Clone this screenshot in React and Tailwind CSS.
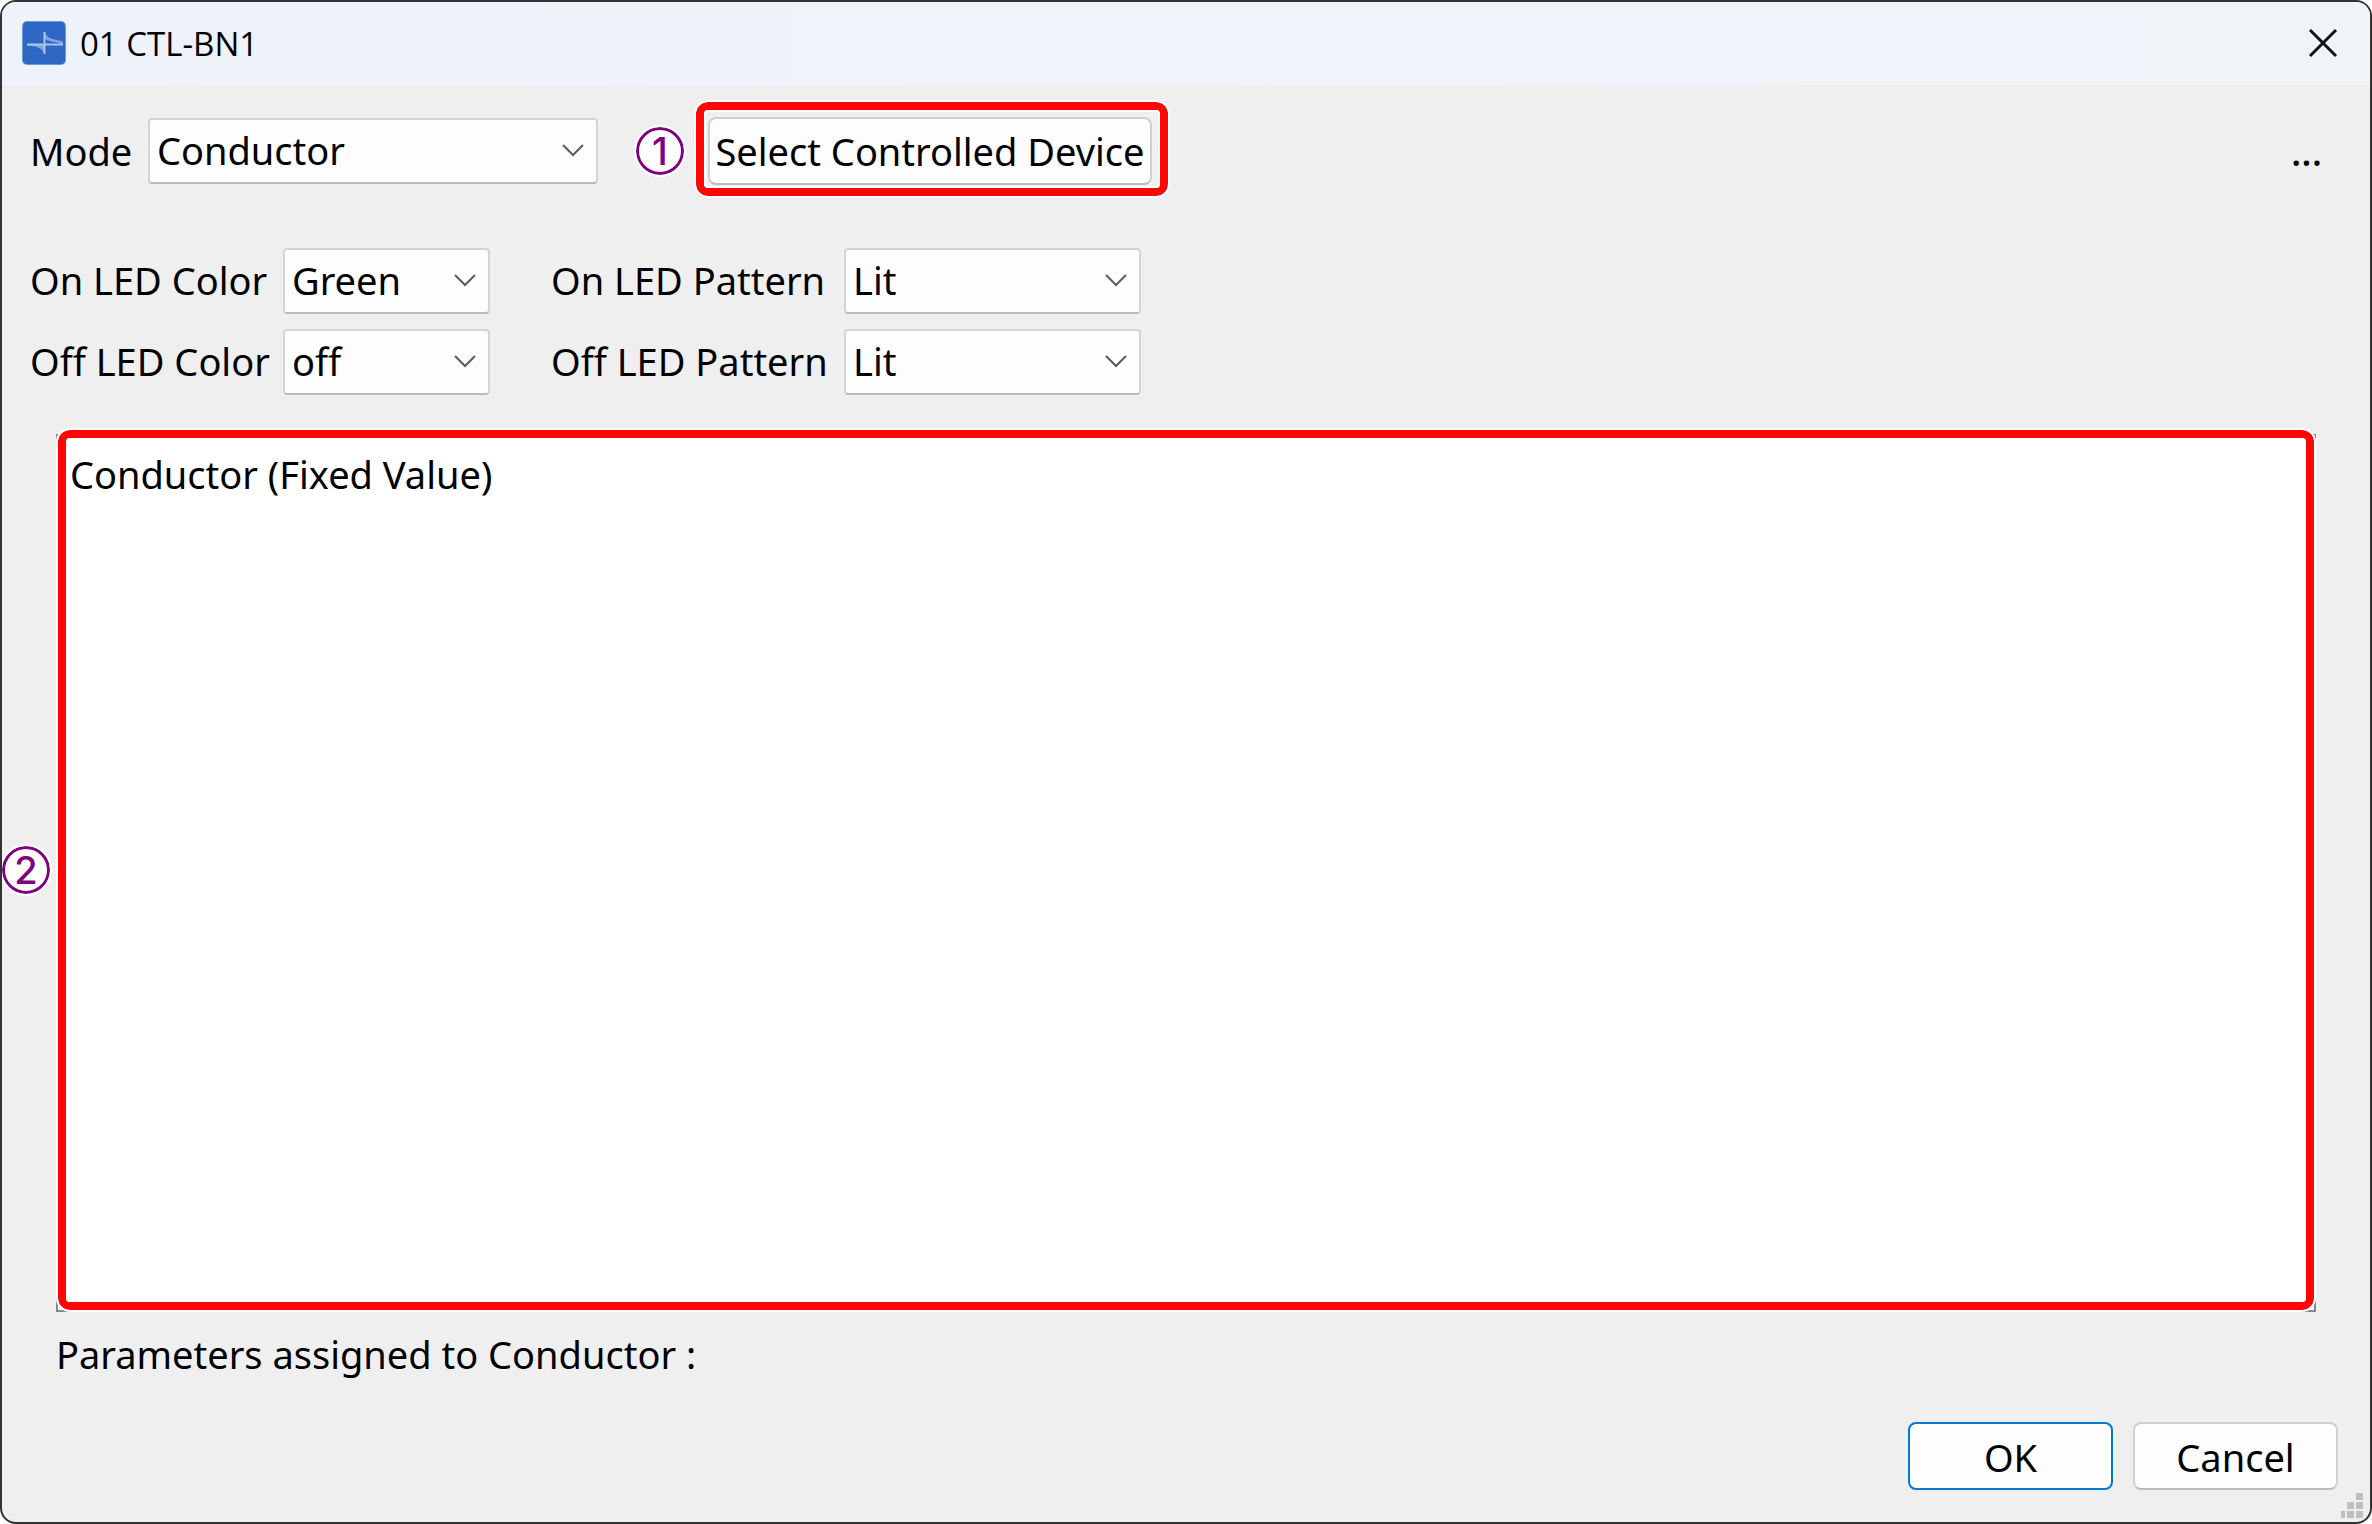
import React, { useState } from 'react';

const COLORS = ['off', 'Green', 'Red', 'Blue'];
const PATTERNS = ['Lit', 'Blink'];
const MODES = ['Conductor', 'Preset', 'Mute'];

function AppIcon() {
  return (
    <svg viewBox="0 0 44 44" className="w-11 h-11 shrink-0" aria-hidden="true">
      <rect width="44" height="44" rx="5" fill="#6f9add" />
      <rect x="1" y="1" width="42" height="42" rx="4" fill="#2f67c4" />
      <path d="M22.5 11 V33" stroke="#a9c3ec" strokeWidth="2" fill="none" />
      <path d="M5 23.5 H41" stroke="#a9c3ec" strokeWidth="2" fill="none" />
      <path d="M22 10 C24 17 30 18 41 20.5 V23 C33 21 24 20 22 17 Z M5 23 C12 23 19 24 23 24 V33 C20 27 14 25 5 24.5 Z" fill="#b9cdf0" fillOpacity="0.6" />
    </svg>
  );
}

function Marker({ children, className }) {
  return (
    <span className={`flex items-center justify-center w-12 h-12 rounded-full border-3 border-[#800080] bg-white outline-2 outline-white font-['Inter',sans-serif] font-medium text-[38px] leading-none text-[#800080] ${className}`}>
      {children}
    </span>
  );
}

function Highlight({ children, className }) {
  return (
    <div className={`absolute pointer-events-none rounded-xl border-8 border-[#ff0505] outline-2 outline-white ${className}`}>
      <span className="absolute inset-0 rounded-sm border-2 border-white" />
      {children}
    </div>
  );
}

function Dropdown({ id, value, options, onChange, className }) {
  return (
    <div className={`relative ${className}`}>
      <select
        id={id}
        value={value}
        onChange={e => onChange(e.target.value)}
        className="block w-full h-[66px] pl-[7px] pr-12 pb-0.5 appearance-none rounded-sm border-2 border-[#d4d4d4] border-b-[#bcbcbc] bg-[#fdfdfd] outline-none"
      >
        {options.map(o => <option key={o}>{o}</option>)}
      </select>
      <svg viewBox="0 0 22 14" className="absolute right-3.5 top-[26px] w-[22px] h-3.5 pointer-events-none" fill="none" stroke="#5c5c5c" strokeWidth="2" aria-hidden="true">
        <path d="M1 1 L11 11 L21 1" />
      </svg>
    </div>
  );
}

function SizeGrip() {
  return (
    <svg viewBox="0 0 22 25" className="absolute right-[7px] bottom-1 w-[22px] h-[25px]" fill="#bfbfbf" aria-hidden="true">
      <path d="M15 0h7v7h-7z M6 9h7v7h-7z M15 9h7v7h-7z M0 18h4v7h-4z M6 18h7v7h-7z M15 18h7v7h-7z" />
    </svg>
  );
}

export default function App() {
  const [mode, setMode] = useState('Conductor');
  const [led, setLed] = useState({ onColor: 'Green', onPattern: 'Lit', offColor: 'off', offPattern: 'Lit' });

  const update = (field, val) => setLed({ ...led, [field]: val });

  return (
    <main className="relative flex flex-col min-h-screen overflow-hidden rounded-2xl border-2 border-[#333333] bg-[#efefef] font-['Noto_Sans',sans-serif] text-[38px] leading-[48px] text-black">
      {/* Title bar */}
      <header className="flex items-center justify-between h-[83px] pl-5 pr-8 pb-0.5 bg-linear-to-r from-[#eef3fb] to-[#eef4f8]">
        <div className="flex items-center gap-3.5">
          <AppIcon />
          <h1 className="pt-0.5 font-['Open_Sans',sans-serif] text-[33px]">01 CTL-BN1</h1>
        </div>
        <button aria-label="Close">
          <svg viewBox="0 0 30 30" className="w-[30px] h-[30px]" stroke="#111111" strokeWidth="3" aria-hidden="true">
            <path d="M2 2 L28 28 M28 2 L2 28" />
          </svg>
        </button>
      </header>

      <div className="flex flex-col grow pt-8 pl-7 pr-8 pb-8">
        {/* Mode */}
        <div className="flex items-center">
          <label htmlFor="mode" className="w-[118px]">Mode</label>
          <Dropdown id="mode" value={mode} options={MODES} onChange={setMode} className="w-[450px]" />
          <Marker className="ml-[38px]">1</Marker>
          <div className="relative ml-6">
            <button className="block h-[68px] w-[444px] rounded-lg border-2 border-[#d0d0d0] border-b-[#bcbcbc] bg-[#fdfdfd] whitespace-nowrap">
              Select Controlled Device
            </button>
            <Highlight className="-left-3 -right-4 -top-[15px] -bottom-[11px]" />
          </div>
          <button className="ml-auto mr-4 font-medium" aria-label="More">...</button>
        </div>

        {/* LED settings */}
        <div className="grid grid-cols-[253px_207px_61px_293px_297px] gap-y-[15px] items-center pt-[63px]">
          <label htmlFor="on-color" className="pb-0.5">On LED Color</label>
          <Dropdown id="on-color" value={led.onColor} options={COLORS} onChange={v => update('onColor', v)} />
          <label htmlFor="on-pattern" className="col-start-4 pb-0.5">On LED Pattern</label>
          <Dropdown id="on-pattern" value={led.onPattern} options={PATTERNS} onChange={v => update('onPattern', v)} />
          <label htmlFor="off-color" className="pb-0.5">Off LED Color</label>
          <Dropdown id="off-color" value={led.offColor} options={COLORS} onChange={v => update('offColor', v)} />
          <label htmlFor="off-pattern" className="col-start-4 pb-0.5">Off LED Pattern</label>
          <Dropdown id="off-pattern" value={led.offPattern} options={PATTERNS} onChange={v => update('offPattern', v)} />
        </div>

        {/* Parameter list */}
        <section className="relative grow mt-[39px] ml-[26px] mr-[22px] border-2 border-[#828790] bg-white">
          <p className="pt-3.5 pl-3">Conductor (Fixed Value)</p>
          <Highlight className="inset-x-0 -top-1.5 bottom-0">
            <Marker className="absolute top-1/2 -left-16 -translate-y-1/2">2</Marker>
          </Highlight>
        </section>

        <p className="mt-[18px] ml-[26px]">Parameters assigned to Conductor :</p>

        {/* Dialog buttons */}
        <footer className="flex justify-end gap-5 mt-11">
          <button className="w-[205px] h-[68px] pt-0.5 rounded-lg border-2 border-[#0078d4] bg-[#fdfdfd]">OK</button>
          <button className="w-[205px] h-[68px] pt-0.5 rounded-lg border-2 border-[#d0d0d0] border-b-[#bcbcbc] bg-[#fdfdfd]">Cancel</button>
        </footer>
      </div>
      <SizeGrip />
    </main>
  );
}
